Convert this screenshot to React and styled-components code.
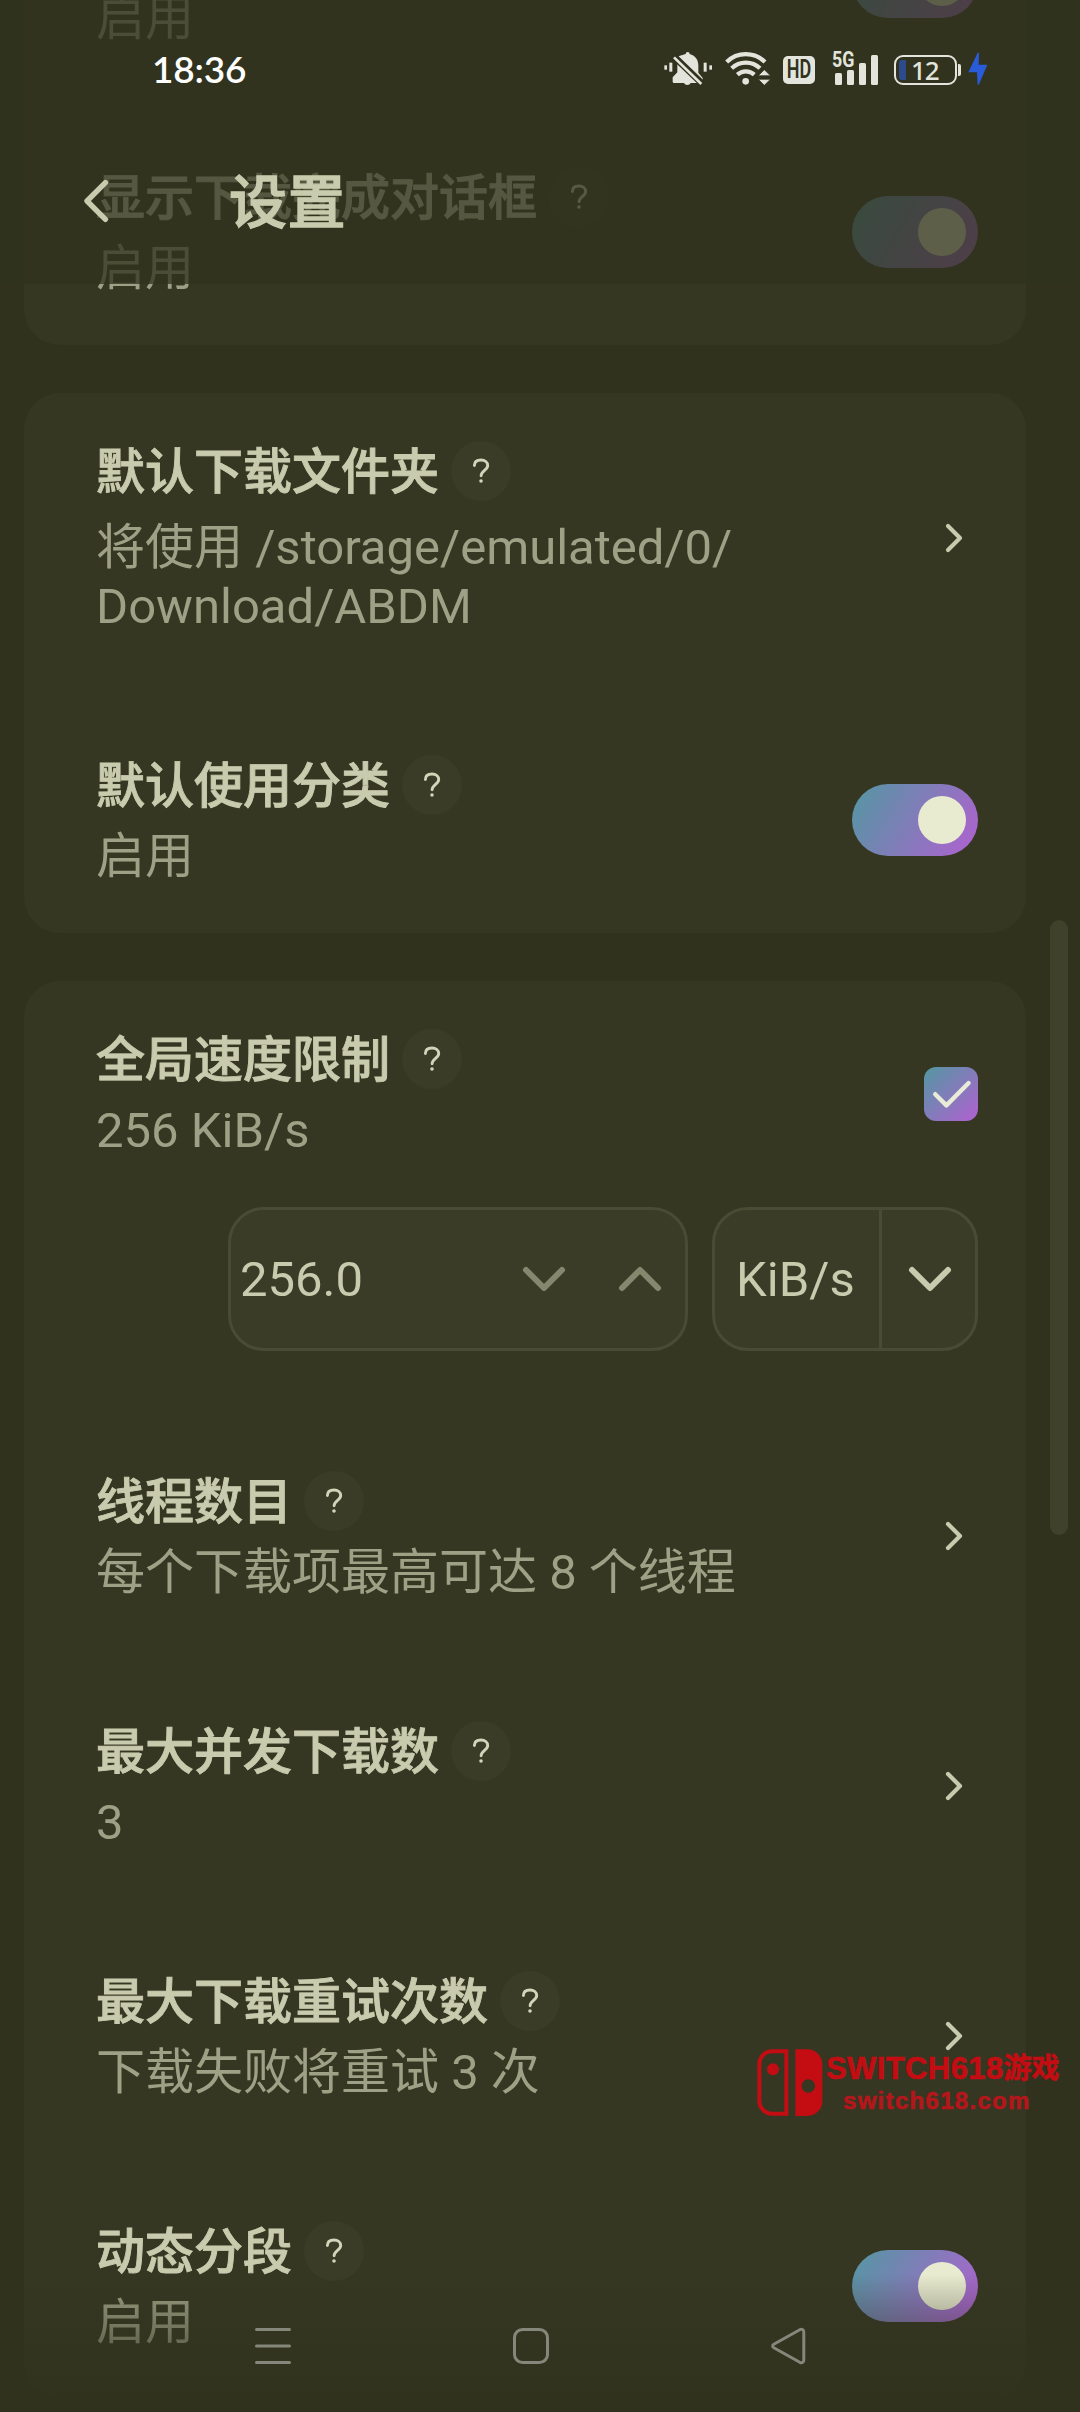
import React from "react";
import styled, { createGlobalStyle } from "styled-components";

const GlobalStyle = createGlobalStyle`
  * { box-sizing: border-box; }
  html, body { margin: 0; padding: 0; background: #30321d; }
`;

const Screen = styled.div`
  position: relative;
  width: 1080px;
  height: 2412px;
  overflow: hidden;
  background: #30321d;
  color: #c9cbae;
  font-family: Roboto, "Noto Sans CJK SC", sans-serif;
  font-size: 49px;
`;

/* ---------- settings list ---------- */

const List = styled.main`
  display: flex;
  flex-direction: column;
  gap: 48px;
  margin-top: -23px;
  padding: 0 54px 0 24px;
`;

const Card = styled.section`
  display: flex;
  flex-direction: column;
  gap: 120px;
  padding: ${(p) => (p.$cut ? "0 48px 48px 72px" : "48px 48px 48px 72px")};
  border-radius: ${(p) => (p.$cut ? "0 0 36px 36px" : "36px")};
  background: #353722;
`;

const Row = styled.div`
  display: flex;
  justify-content: space-between;
  align-items: ${(p) => (p.$cut ? "flex-start" : "center")};
`;

const RowText = styled.div`
  display: flex;
  flex-direction: column;
`;

const TitleLine = styled.div`
  display: flex;
  align-items: center;
  gap: 12px;
  height: 60px;
`;

const Title = styled.span`
  font-weight: 500;
  line-height: 60px;
  padding-top: 3px;
  white-space: nowrap;
  -webkit-text-stroke: 0.9px currentColor;
`;

const Help = styled.span`
  display: flex;
  align-items: center;
  justify-content: center;
  width: 60px;
  height: 60px;
  border-radius: 50%;
  background: #3a3c27;
`;

const Desc = styled.div`
  margin-top: ${(p) => (p.$lines ? 17 : 13)}px;
  margin-bottom: -1px;
  line-height: ${(p) => (p.$lines ? 59 : 58)}px;
  color: #9fa186;
  white-space: pre-line;
`;

const Track = styled.span`
  display: flex;
  justify-content: flex-end;
  align-items: center;
  flex: none;
  width: 126px;
  height: 72px;
  margin-top: ${(p) => (p.$cut ? "-31px" : 0)};
  padding: 12px;
  border-radius: 36px;
  background: linear-gradient(120deg, #5398a2, #b160d1);
`;

const Knob = styled.span`
  width: 48px;
  height: 48px;
  border-radius: 50%;
  background: #e8ebd0;
`;

const Check = styled.span`
  display: flex;
  width: 54px;
  height: 54px;
  border-radius: 12px;
  background: linear-gradient(135deg, #5398a2, #b160d1);
`;

const ChevronSlot = styled.span`
  display: flex;
  align-items: center;
  justify-content: center;
  width: 48px;
  height: 48px;
`;

const LimitGroup = styled.div`
  display: flex;
  flex-direction: column;
  gap: 48px;
`;

const LimitFields = styled.div`
  display: flex;
  justify-content: flex-end;
  gap: 24px;
`;

const Field = styled.div`
  display: flex;
  align-items: center;
  gap: 6px;
  width: ${(p) => p.$w}px;
  height: 144px;
  border: 3px solid #494b34;
  border-radius: 36px;
  background: #3a3c27;
`;

const FieldValue = styled.span`
  flex: 1;
  padding-top: 1px;
  padding-left: ${(p) => p.$pad}px;
  line-height: 60px;
  white-space: nowrap;
`;

const StepButton = styled.span`
  display: flex;
  align-items: center;
  justify-content: center;
  flex: none;
  width: ${(p) => (p.$strong ? 96 : 90)}px;
  height: 100%;
  padding-left: ${(p) => (p.$strong ? 2 : 0)}px;
  color: ${(p) => (p.$strong ? "#c9cbae" : "#85876e")};
  border-left: ${(p) => (p.$strong ? "3px solid #494b34" : "none")};
`;

/* ---------- overlays ---------- */

const TopBar = styled.header`
  position: absolute;
  top: 0;
  left: 0;
  width: 1080px;
  height: 284px;
  background: rgba(48, 50, 29, 0.755);
`;

const StatusBar = styled.div`
  display: flex;
  align-items: center;
  justify-content: space-between;
  height: 138px;
  padding: 0 92px 0 152px;
  color: #e3e5dc;
`;

const Clock = styled.span`
  color: #ffffff;
  font-family: Lato, Roboto, sans-serif;
  font-weight: 600;
  font-size: 37px;
  line-height: 44px;
  letter-spacing: -0.2px;
`;

const StatusIcons = styled.div`
  display: flex;
  align-items: center;
  height: 36px;
`;

const WifiSlot = styled.span`
  display: flex;
  margin-left: 12px;
`;

const HdBadge = styled.span`
  display: flex;
  align-items: center;
  justify-content: center;
  width: 32px;
  height: 28px;
  margin: 2px 17px 0 13px;
  border-radius: 5px;
  background: #e3e5dc;
  color: #30321d;
  font-size: 25px;
  font-weight: 600;
  line-height: 28px;
`;

const Squeeze = styled.span`
  display: inline-block;
  transform: scaleX(${(p) => p.$x});
`;

const Signal = styled.div`
  display: grid;
  width: 46px;
  height: 34px;
  margin-right: 16px;
`;

const Network = styled.span`
  grid-area: 1 / 1;
  font-size: 21.5px;
  font-weight: 700;
  line-height: 16px;
  transform: scaleX(0.83);
  transform-origin: left;
`;

const Bars = styled.div`
  grid-area: 1 / 1;
  display: flex;
  align-items: flex-end;
  justify-content: space-between;
  padding: 0 0 1px 3px;
`;

const Bar = styled.span`
  width: 7px;
  height: ${(p) => p.$h}px;
  border-radius: 1.5px;
  background: #e3e5dc;
`;

const Battery = styled.div`
  display: flex;
  align-items: center;
  width: 63px;
  height: 30px;
  margin-top: 2px;
  padding: 3px;
  border: 2px solid #e3e5dc;
  border-radius: 9px;
`;

const BatteryLevel = styled.span`
  width: 7px;
  height: 20px;
  border-radius: 3px 1px 1px 3px;
  background: #2c4a8c;
`;

const BatteryText = styled.span`
  margin-left: 5px;
  font-family: "Noto Sans", sans-serif;
  font-size: 26px;
  font-weight: 500;
  line-height: 26px;
  letter-spacing: -1px;
`;

const BatteryTip = styled.span`
  width: 3px;
  height: 12px;
  margin: 2px 7px 0 1px;
  border-radius: 0 2px 2px 0;
  background: #e3e5dc;
`;

const AppBar = styled.div`
  display: flex;
  align-items: center;
  gap: 111px;
  height: 126px;
  padding-left: 72px;
`;

const BackSlot = styled.span`
  display: flex;
  width: 46px;
`;

const PageTitle = styled.h1`
  margin: 0;
  padding-top: 4px;
  font-size: 58px;
  font-weight: 500;
  line-height: 72px;
  letter-spacing: 0.5px;
  -webkit-text-stroke: 1.3px currentColor;
`;

const NavBar = styled.nav`
  position: absolute;
  left: 0;
  bottom: 0;
  display: flex;
  justify-content: space-between;
  width: 1080px;
  height: 138px;
  padding: 53px 273px 0 254px;
  background: linear-gradient(rgba(48, 50, 29, 0), rgba(48, 50, 29, 1));
`;

const ScrollThumb = styled.span`
  position: absolute;
  top: 920px;
  left: 1050px;
  width: 18px;
  height: 615px;
  border-radius: 9px;
  background: #3f412b;
`;

const Watermark = styled.div`
  position: absolute;
  top: 2049px;
  left: 757px;
  display: flex;
  gap: 3px;
  color: #c40c13;
  font-family: "Liberation Sans", "Noto Sans CJK SC", sans-serif;
  font-weight: 700;
  white-space: nowrap;
  -webkit-text-stroke: 0.6px currentColor;
`;

const MarkText = styled.div`
  display: flex;
  flex-direction: column;
`;

const MarkName = styled.span`
  display: flex;
  align-items: center;
  margin-top: 3px;
  font-size: 31px;
  line-height: 34px;
  letter-spacing: 0.4px;
`;

const MarkHan = styled.span`
  font-size: 28px;
  letter-spacing: 0;
`;

const MarkSite = styled.span`
  padding-left: 17px;
  color: #b5161b;
  font-size: 24px;
  line-height: 30px;
  letter-spacing: 1.3px;
`;

/* ---------- drawings ---------- */

const QuestionIcon = () => (
  <svg width="24" height="30" viewBox="0 0 24 30" fill="none" stroke="#d3d5ba" strokeWidth="2.9" strokeLinecap="round">
    <path d="M5.4 9.6C5.4 5.8 8 4 12 4s6.7 2.2 6.7 5.5c0 4.6-6.6 5.2-6.6 10.3" />
    <circle cx="12" cy="25" r="1.8" fill="#d3d5ba" stroke="none" />
  </svg>
);

const RightIcon = () => (
  <svg width="48" height="48" viewBox="0 0 48 48" fill="none" stroke="#c9cbae" strokeWidth="4.2" strokeLinecap="round" strokeLinejoin="round">
    <path d="M18 12l12 12-12 12" />
  </svg>
);

const StepIcon = ({ up }) => (
  <svg width="48" height="48" viewBox="0 0 48 48" fill="none" stroke="currentColor" strokeWidth="6" strokeLinecap="round" strokeLinejoin="round">
    <path d={up ? "M6 33L24 15 42 33" : "M6 15L24 33 42 15"} />
  </svg>
);

const CheckIcon = () => (
  <svg width="54" height="54" viewBox="0 0 54 54" fill="none" stroke="#e8ebd8" strokeWidth="4.4" strokeLinecap="round" strokeLinejoin="round">
    <path d="M11.2 27.2L22.4 38.4 44.6 16" />
  </svg>
);

const BackIcon = () => (
  <svg width="46" height="46" viewBox="0 0 46 46" fill="none" stroke="#c9cbae" strokeWidth="5.4" strokeLinecap="round" strokeLinejoin="round">
    <path d="M33.4 4.6L15 23l18.4 18.4" />
  </svg>
);

const MuteIcon = () => (
  <svg width="49" height="36" viewBox="27 34 147 108" fill="#e3e5dc">
    <rect x="28" y="77" width="8" height="13" />
    <rect x="43" y="69" width="9" height="27" />
    <rect x="146" y="69" width="9" height="27" />
    <rect x="163" y="77" width="8" height="13" />
    <path d="M70 50l22-7a6 6 0 0 1 12 0c16 4 26 17 26 34v22l13 16v8l-7 7z" />
    <path d="M64 60l69 70H56c-3 0-3-3-3-5v-12l14-15V74z" />
    <path d="M86 127h22c-1 6-6 9-11 9s-10-3-11-9z" />
    <path d="M52 46l92 88" stroke="#30321d" strokeWidth="20" fill="none" />
    <path d="M57 53l82 80" stroke="#e3e5dc" strokeWidth="8" fill="none" />
  </svg>
);

const WifiIcon = () => (
  <svg width="45" height="36" viewBox="212 34 135 108" fill="none" stroke="#e3e5dc" strokeWidth="12.5">
    <path d="M217 67a82 82 0 0 1 115 0" />
    <path d="M232 86a61 61 0 0 1 85 0" />
    <path d="M249 105a38 38 0 0 1 51 0" />
    <circle cx="274" cy="125" r="10" fill="#e3e5dc" stroke="none" />
    <path d="M312 108h36l-18-18zM312 119h36l-18 18z" fill="#e3e5dc" stroke="#30321d" strokeWidth="2" />
  </svg>
);

const BoltIcon = () => (
  <svg width="20" height="34" viewBox="940 38 60 100" fill="#2a5bd9">
    <path d="M969 39l-28 59h26l2 38 4-2 25-59h-26l1-36z" />
  </svg>
);

const MenuIcon = () => (
  <svg width="38" height="38" viewBox="0 0 38 38" stroke="#85877a" strokeWidth="3" strokeLinecap="round">
    <path d="M2.5 2.5h33M2.5 19h33M2.5 35.5h33" />
  </svg>
);

const HomeIcon = () => (
  <svg width="38" height="38" viewBox="1 0 38 38" fill="none" stroke="#85877a" strokeWidth="3">
    <rect x="2.5" y="2.5" width="33" height="33" rx="8" />
  </svg>
);

const NavBackIcon = () => (
  <svg width="36" height="38" viewBox="0 0 36 38" fill="none" stroke="#85877a" strokeWidth="3" strokeLinejoin="round">
    <path d="M2.8 17.2L28.8 2.7c2-1 4 0 4 2v28.6c0 2-2 3-4 2L2.8 20.8c-1.5-.9-1.5-2.7 0-3.6z" />
  </svg>
);

const ConsoleLogo = () => (
  <svg width="66" height="68" viewBox="51 149 198 204" fill="#c40c13">
    <path d="M96 156h43v187H96a38 38 0 0 1-38-38V194a38 38 0 0 1 38-38z" fill="none" stroke="#c40c13" strokeWidth="12" />
    <circle cx="99" cy="210" r="18" />
    <path fillRule="evenodd" d="M166 150h36a45 45 0 0 1 45 45v110a45 45 0 0 1-45 45h-36zM205 240a20 20 0 1 0 .1 0z" />
  </svg>
);

/* ---------- parts ---------- */

const Toggle = ({ cut }) => (
  <Track $cut={cut}>
    <Knob />
  </Track>
);

const Chevron = () => (
  <ChevronSlot>
    <RightIcon />
  </ChevronSlot>
);

const Setting = ({ title, desc, lines, children }) => (
  <Row>
    <RowText>
      <TitleLine>
        <Title>{title}</Title>
        <Help>
          <QuestionIcon />
        </Help>
      </TitleLine>
      <Desc $lines={lines}>{desc}</Desc>
    </RowText>
    {children}
  </Row>
);

export default function App() {
  return (
    <Screen>
      <GlobalStyle />
      <List>
        <Card $cut>
          <Row $cut>
            <Desc>启用</Desc>
            <Toggle cut />
          </Row>
          <Setting title="显示下载完成对话框" desc="启用">
            <Toggle />
          </Setting>
        </Card>

        <Card>
          <Setting title="默认下载文件夹" desc={"将使用 /storage/emulated/0/\nDownload/ABDM"} lines>
            <Chevron />
          </Setting>
          <Setting title="默认使用分类" desc="启用">
            <Toggle />
          </Setting>
        </Card>

        <Card>
          <LimitGroup>
            <Setting title="全局速度限制" desc="256 KiB/s">
              <Check>
                <CheckIcon />
              </Check>
            </Setting>
            <LimitFields>
              <Field $w={460}>
                <FieldValue $pad={9}>256.0</FieldValue>
                <StepButton>
                  <StepIcon />
                </StepButton>
                <StepButton>
                  <StepIcon up />
                </StepButton>
              </Field>
              <Field $w={266}>
                <FieldValue $pad={21}>KiB/s</FieldValue>
                <StepButton $strong>
                  <StepIcon />
                </StepButton>
              </Field>
            </LimitFields>
          </LimitGroup>
          <Setting title="线程数目" desc="每个下载项最高可达 8 个线程">
            <Chevron />
          </Setting>
          <Setting title="最大并发下载数" desc="3">
            <Chevron />
          </Setting>
          <Setting title="最大下载重试次数" desc="下载失败将重试 3 次">
            <Chevron />
          </Setting>
          <Setting title="动态分段" desc="启用">
            <Toggle />
          </Setting>
        </Card>
      </List>

      <ScrollThumb />

      <TopBar>
        <StatusBar>
          <Clock>18:36</Clock>
          <StatusIcons>
            <MuteIcon />
            <WifiSlot>
              <WifiIcon />
            </WifiSlot>
            <HdBadge>
              <Squeeze $x={0.72}>HD</Squeeze>
            </HdBadge>
            <Signal>
              <Network>5G</Network>
              <Bars>
                <Bar $h={12} />
                <Bar $h={15} />
                <Bar $h={22} />
                <Bar $h={30} />
              </Bars>
            </Signal>
            <Battery>
              <BatteryLevel />
              <BatteryText>12</BatteryText>
            </Battery>
            <BatteryTip />
            <BoltIcon />
          </StatusIcons>
        </StatusBar>
        <AppBar>
          <BackSlot>
            <BackIcon />
          </BackSlot>
          <PageTitle>设置</PageTitle>
        </AppBar>
      </TopBar>

      <NavBar>
        <MenuIcon />
        <HomeIcon />
        <NavBackIcon />
      </NavBar>

      <Watermark>
        <ConsoleLogo />
        <MarkText>
          <MarkName>
            SWITCH618<MarkHan>游戏</MarkHan>
          </MarkName>
          <MarkSite>switch618.com</MarkSite>
        </MarkText>
      </Watermark>
    </Screen>
  );
}
